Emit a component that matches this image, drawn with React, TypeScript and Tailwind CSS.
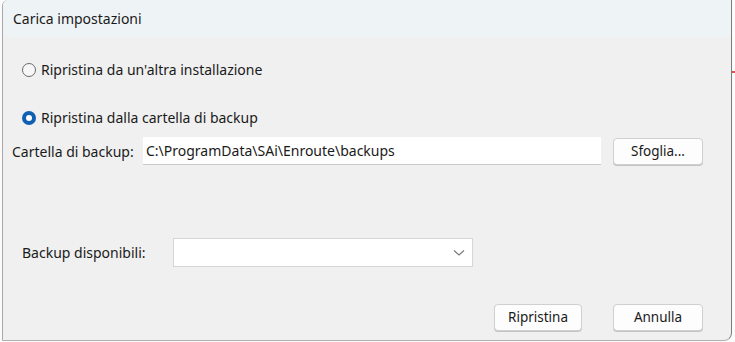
import React from "react";

const font = { fontFamily: '"Noto Sans", "Open Sans", sans-serif' };

const Radio = ({ checked, label }: { checked?: boolean; label: string }) => (
	<div className="flex items-center h-[20px] pl-[19px] gap-[5px]">
		{checked ? (
			<span className="w-[14px] h-[14px] rounded-full bg-[#0f5fb3] flex items-center justify-center">
				<span className="w-[6px] h-[6px] rounded-full bg-white" />
			</span>
		) : (
			<span className="w-[14px] h-[14px] rounded-full border border-[#6b6b6b] bg-[#f7f7f7]" />
		)}
		<span className="text-[14px] text-[#1a1a1a] leading-none">{label}</span>
	</div>
);

const Btn = ({ label, w }: { label: string; w: string }) => (
	<button
		className={`${w} h-[27px] rounded-[4px] border border-[#d0d0d0] bg-[#fdfdfd] text-[13.5px] text-[#1a1a1a] shadow-[0_1px_0_#c4c4c4]`}
	>
		{label}
	</button>
);

export default function App() {
	return (
		<div className="w-[735px] h-[342px] bg-[#fbfbfb] flex" style={font}>
			{/* Dialog */}
			<div className="ml-[2px] w-[730px] h-[341px] border-l border-r border-b border-l-[#a8a8a8] border-r-[#7c7c7c] border-b-[#b0b0b0] rounded-tl-[6px] rounded-br-[8px] bg-[#f0f0f0] flex flex-col overflow-hidden">
				<div className="h-[37px] bg-[#eef3f6] flex items-center pl-[10px] text-[14px] text-[#1a1a1a]">
					Carica impostazioni
				</div>

				<div className="flex flex-col">
					<div className="mt-[23px]">
						<Radio label="Ripristina da un'altra installazione" />
					</div>
					<div className="mt-[28px]">
						<Radio checked label="Ripristina dalla cartella di backup" />
					</div>

					{/* Folder row */}
					<div className="mt-[9px] flex items-center h-[28px]">
						<span className="ml-[9px] w-[131px] text-[14px] text-[#1a1a1a]">Cartella di backup:</span>
						<div className="w-[458px] h-[28px] bg-white border-b border-[#c8c8c8] flex items-center pl-[3px] text-[14px] text-[#1a1a1a]">
							C:\ProgramData\SAi\Enroute\backups
						</div>
						<div className="ml-[12px]">
							<Btn label="Sfoglia..." w="w-[90px]" />
						</div>
					</div>

					{/* Available backups */}
					<div className="mt-[73px] flex items-center h-[29px]">
						<span className="ml-[19px] w-[151px] text-[14px] text-[#1a1a1a]">Backup disponibili:</span>
						<div className="w-[300px] h-[29px] bg-white border border-[#d6d6d6] flex items-center justify-end pr-[7px]">
							<svg width="12" height="8" viewBox="0 0 12 8" fill="none">
								<path d="M1 1.5 L6 6 L11 1.5" stroke="#7a7a7a" strokeWidth="1.2" />
							</svg>
						</div>
					</div>

					{/* Footer buttons */}
					<div className="mt-[37px] flex pl-[491px] gap-[31px]">
						<Btn label="Ripristina" w="w-[88px]" />
						<Btn label="Annulla" w="w-[90px]" />
					</div>
				</div>
			</div>

			{/* Outside strip */}
			<div className="flex-1 flex flex-col pt-[71px]">
				<div className="h-[2px] bg-[#e05050]" />
			</div>
		</div>
	);
}
